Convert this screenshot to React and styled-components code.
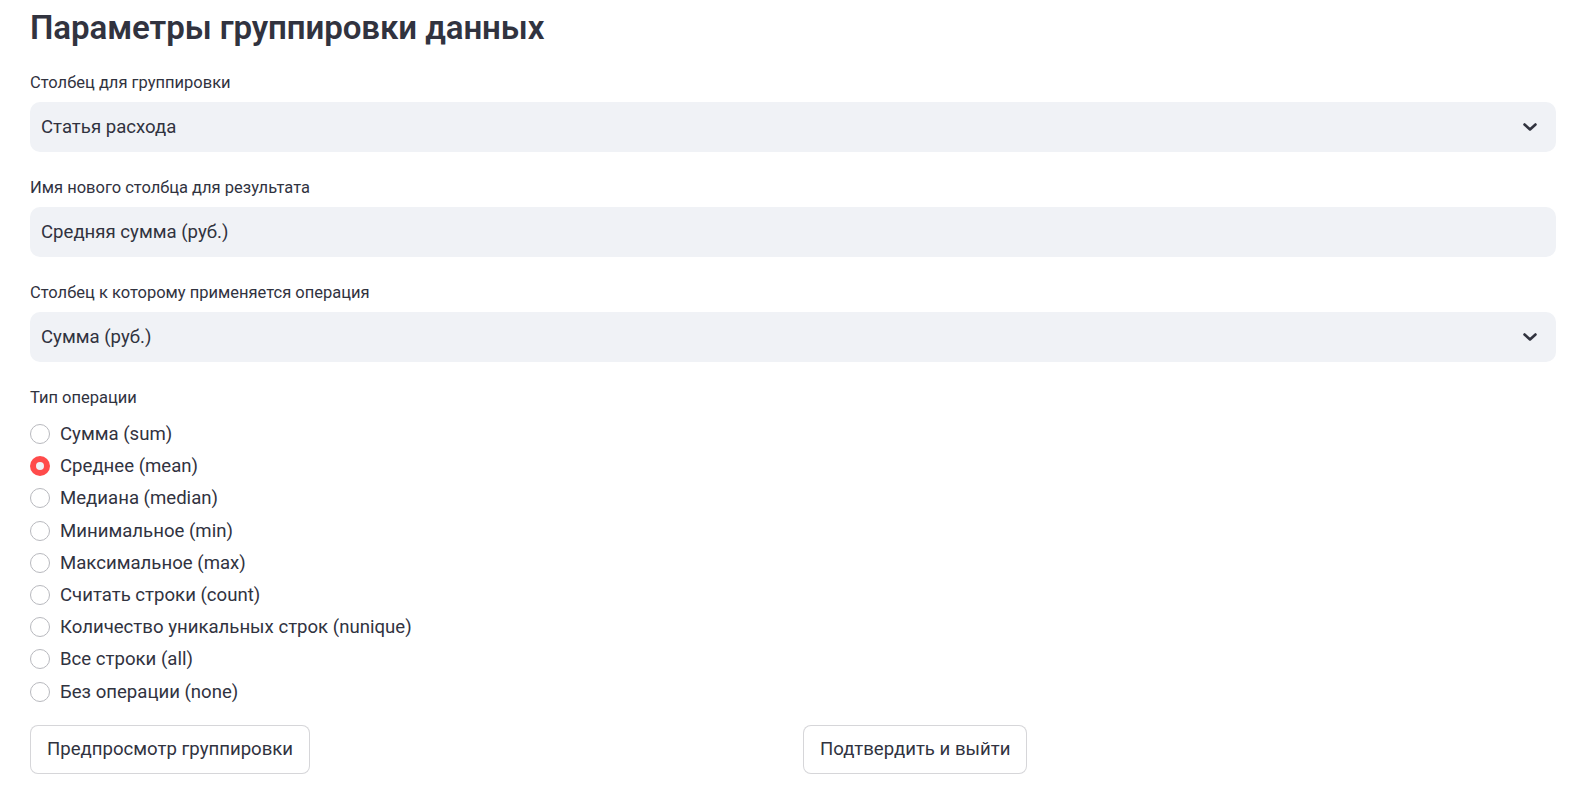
import React, { useState } from 'react';
import styled, { createGlobalStyle } from 'styled-components';

const GlobalStyle = createGlobalStyle`
  body {
    margin: 0;
    background: #ffffff;
    font-family: Roboto, "Noto Sans", sans-serif;
    color: rgb(49, 51, 63);
  }
`;

const Page = styled.div`
  padding: 5px 28px 0 30px;
  display: flex;
  flex-direction: column;
`;

const Title = styled.h2`
  margin: 0 0 22px;
  font-size: 33.1px;
  line-height: 46px;
  font-weight: 600;
  letter-spacing: -0.1px;
`;

const Field = styled.div`
  display: flex;
  flex-direction: column;
  gap: 9px;
  margin-bottom: 26px;
`;

const Label = styled.div`
  font-size: 16.5px;
  line-height: 20px;
`;

const Box = styled.div`
  height: 50px;
  border-radius: 10px;
  background: rgb(240, 242, 246);
  display: flex;
  align-items: center;
  justify-content: space-between;
  padding: 0 19px 0 11px;
  font-size: 18.6px;
`;

const Chevron = () => (
  <svg width="14" height="8" viewBox="0 0 14 8" fill="none">
    <path d="M1.5 1.5 L7 6.5 L12.5 1.5" stroke="rgb(49,51,63)" strokeWidth="2.6" strokeLinecap="round" strokeLinejoin="round" />
  </svg>
);

const RadioGroup = styled.div`
  display: flex;
  flex-direction: column;
  margin-top: 10px;
`;

const RadioRow = styled.label`
  height: 32.2px;
  display: flex;
  align-items: center;
  gap: 10px;
  font-size: 18.6px;
  cursor: pointer;
`;

const Dot = styled.span`
  width: 20px;
  height: 20px;
  box-sizing: border-box;
  border-radius: 50%;
  flex: none;
  display: flex;
  align-items: center;
  justify-content: center;
  border: ${(p) => (p.$on ? 'none' : '1px solid #b8b9be')};
  background: ${(p) => (p.$on ? 'rgb(255, 75, 75)' : '#ffffff')};
  &::after {
    content: '';
    display: ${(p) => (p.$on ? 'block' : 'none')};
    width: 8px;
    height: 8px;
    border-radius: 50%;
    background: rgb(240, 242, 246);
  }
`;

const Buttons = styled.div`
  display: grid;
  grid-template-columns: 1fr 1fr;
  gap: 20px;
  margin-top: 17px;
`;

const Button = styled.button`
  justify-self: start;
  height: 49px;
  padding: 0 16px;
  border: 1px solid rgba(49, 51, 63, 0.2);
  border-radius: 8px;
  background: #ffffff;
  color: rgb(49, 51, 63);
  font-family: inherit;
  font-size: 18.6px;
  cursor: pointer;
`;

const options = [
  'Сумма (sum)',
  'Среднее (mean)',
  'Медиана (median)',
  'Минимальное (min)',
  'Максимальное (max)',
  'Считать строки (count)',
  'Количество уникальных строк (nunique)',
  'Все строки (all)',
  'Без операции (none)',
];

export default function App() {
  const [op, setOp] = useState(1);

  return (
    <Page>
      <GlobalStyle />
      <Title>Параметры группировки данных</Title>

      <Field>
        <Label>Столбец для группировки</Label>
        <Box>
          <span>Статья расхода</span>
          <Chevron />
        </Box>
      </Field>

      <Field>
        <Label>Имя нового столбца для результата</Label>
        <Box>
          <span>Средняя сумма (руб.)</span>
        </Box>
      </Field>

      <Field>
        <Label>Столбец к которому применяется операция</Label>
        <Box>
          <span>Сумма (руб.)</span>
          <Chevron />
        </Box>
      </Field>

      <Label>Тип операции</Label>
      <RadioGroup>
        {options.map((o, i) => (
          <RadioRow key={o} onClick={() => setOp(i)}>
            <Dot $on={op === i} />
            {o}
          </RadioRow>
        ))}
      </RadioGroup>

      <Buttons>
        <Button>Предпросмотр группировки</Button>
        <Button>Подтвердить и выйти</Button>
      </Buttons>
    </Page>
  );
}
